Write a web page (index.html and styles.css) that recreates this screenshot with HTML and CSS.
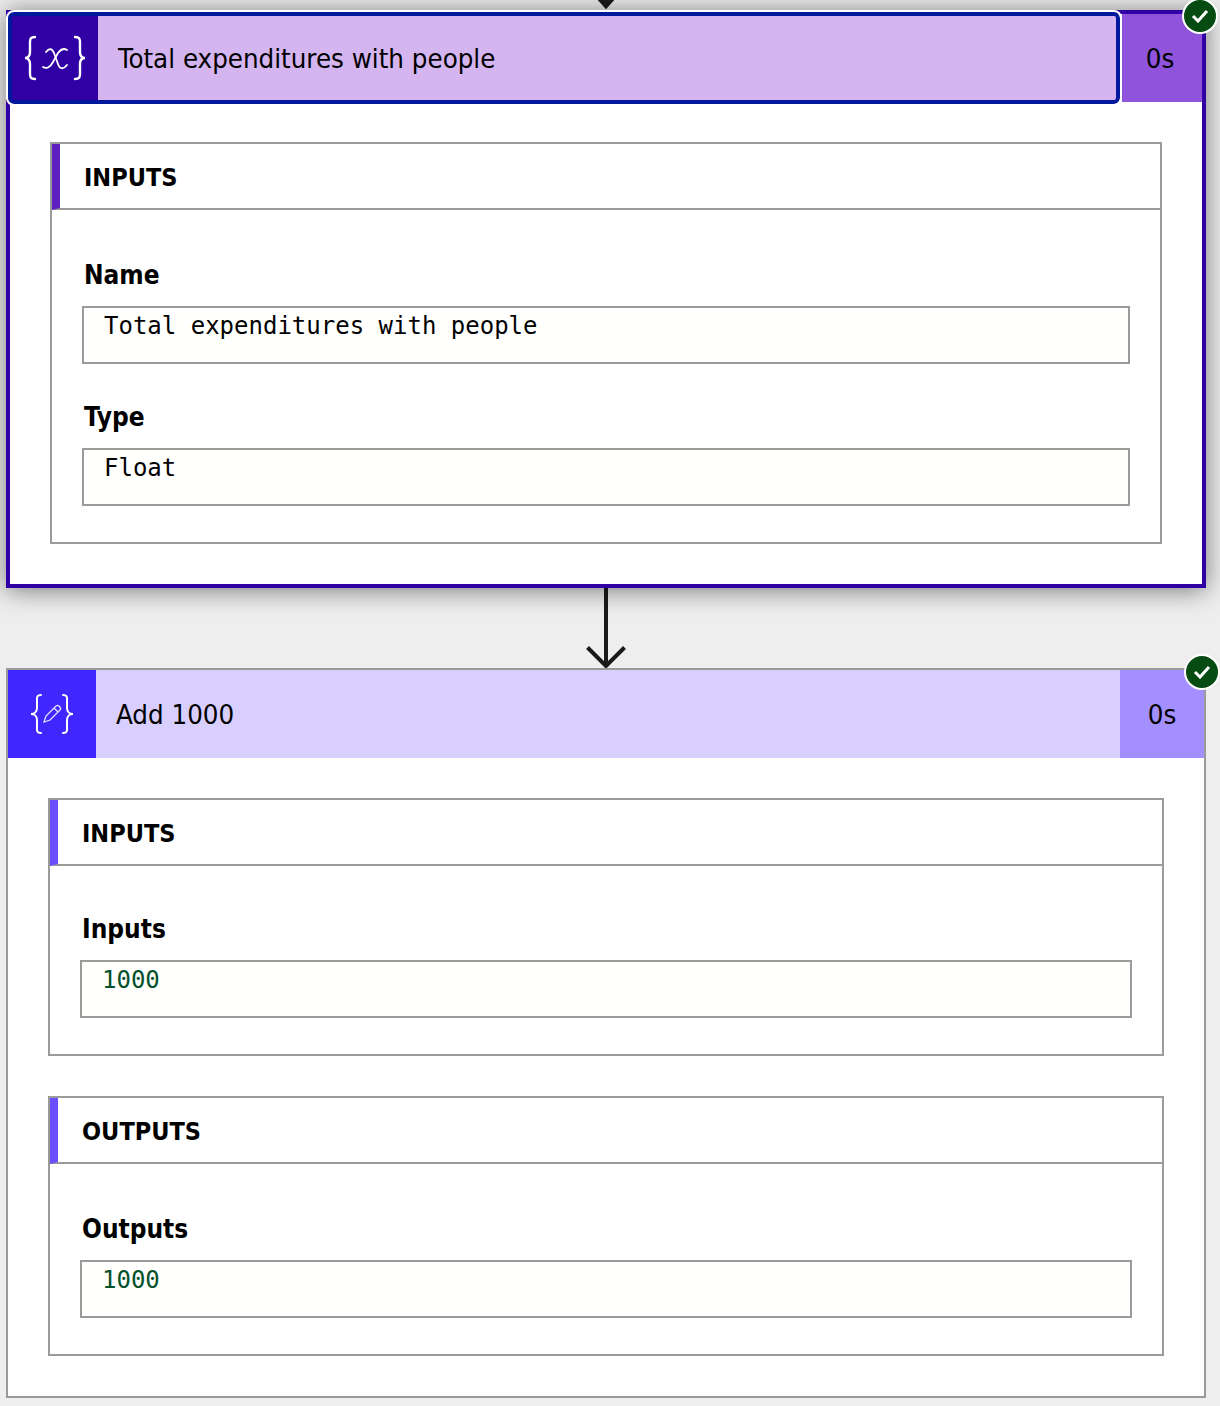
FILE: index.html
```html
<!DOCTYPE html>
<html>
    <head>
        <title>Run details</title>
        <meta charset="UTF-8">
        <link rel="stylesheet" href="styles.css">
    </head>
    <body>
        <div class="connector connector-top">
            <svg width="40" height="10" viewBox="0 0 40 10"><path d="M11 -3 L20 7 L29 -3 Z" fill="#1b1a19" stroke="#1b1a19" stroke-width="3"/></svg>
        </div>

        <div class="card card-selected">
            <div class="card-head">
                <div class="title-wrap">
                    <div class="card-icon">
                        <svg width="64" height="46" viewBox="0 0 64 46" fill="none" stroke="#fff" stroke-width="2.400" stroke-linecap="round">
                            <path d="M12 2 C6 2 7 6 7 12 V17 C7 21 5 23 2 23 C5 23 7 25 7 29 V34 C7 40 6 44 12 44"/>
                            <path d="M52 2 C58 2 57 6 57 12 V17 C57 21 59 23 62 23 C59 23 57 25 57 29 V34 C57 40 58 44 52 44"/>
                            <path d="M23 17 C26 13 29 13 31 18 L35 29 C37 35 41 34 44 30" stroke-width="1.800"/>
                            <path d="M44 15 C41 13 38 14 35 18 L30 27 C27 33 23 34 20 32" stroke-width="1.800"/>
                        </svg>
                    </div>
                    <div class="card-title">Total expenditures with people</div>
                </div>
                <div class="card-time">0s</div>
            </div>
            <div class="badge">
                <svg width="18" height="14" viewBox="0 0 18 14" fill="none" stroke="#fff" stroke-width="3"><path d="M2 7 L7 12 L16 2"/></svg>
            </div>
            <div class="card-body">
                <div class="section">
                    <div class="section-head">INPUTS</div>
                    <div class="section-body">
                        <div class="field-label">Name</div>
                        <div class="field-box">Total expenditures with people</div>
                        <div class="field-label">Type</div>
                        <div class="field-box">Float</div>
                    </div>
                </div>
            </div>
        </div>

        <div class="connector">
            <svg width="40" height="80" viewBox="0 0 40 80" fill="none" stroke="#1b1a19" stroke-width="4"><path d="M20 0 V78 M1.500 59.500 L20 78 L38.500 59.500"/></svg>
        </div>

        <div class="card card-plain">
            <div class="card-head">
                <div class="card-icon">
                    <svg width="46" height="40" viewBox="0 0 46 40" fill="none" stroke="#fff" stroke-width="2" stroke-linecap="round">
                        <path d="M12 1 C7 1 8 4 8 9 V14 C8 18 5 20 2 20 C5 20 8 22 8 26 V31 C8 36 7 39 12 39"/>
                        <path d="M34 1 C39 1 38 4 38 9 V14 C38 18 41 20 44 20 C41 20 38 22 38 26 V31 C38 36 39 39 34 39"/>
                        <path d="M15 28 L17 22 L27 12 C29 10 33 14 31 16 L21 26 Z M25 14 L29 18" stroke-width="1.300" opacity="0.85"/>
                    </svg>
                </div>
                <div class="card-title">Add 1000</div>
                <div class="card-time">0s</div>
            </div>
            <div class="badge">
                <svg width="18" height="14" viewBox="0 0 18 14" fill="none" stroke="#fff" stroke-width="3"><path d="M2 7 L7 12 L16 2"/></svg>
            </div>
            <div class="card-body">
                <div class="section">
                    <div class="section-head">INPUTS</div>
                    <div class="section-body">
                        <div class="field-label">Inputs</div>
                        <div class="field-box number">1000</div>
                    </div>
                </div>
                <div class="section">
                    <div class="section-head">OUTPUTS</div>
                    <div class="section-body">
                        <div class="field-label">Outputs</div>
                        <div class="field-box number">1000</div>
                    </div>
                </div>
            </div>
        </div>
    </body>
</html>
```

FILE: styles.css
```css
* {
    margin: 0;
    padding: 0;
    box-sizing: border-box;
    font-family: "DejaVu Sans", sans-serif;
    font-stretch: condensed;
    color: #000;
}
body {
    background-color: #eeeeee;
    padding: 0 14px 0 6px;
    overflow: hidden;
}
.connector {
    display: flex;
    justify-content: center;
    height: 80px;
}
.connector-top {
    height: 10px;
}
.connector svg {
    display: block;
}
.card {
    position: relative;
    width: 1200px;
    background-color: #fff;
}
.card-selected {
    height: 578px;
    border: 4px solid #3000a4;
    box-shadow: 0 2px 24px rgba(0, 0, 0, 0.5);
}
.card-plain {
    height: 730px;
    border: 2px solid #9b9a99;
}
.card-head {
    display: flex;
    height: 88px;
}
.card-icon {
    display: flex;
    justify-content: center;
    align-items: center;
    flex-shrink: 0;
    width: 88px;
}
.card-title {
    flex: 1;
    padding-left: 20px;
    font-size: 27.400px;
    line-height: 90px;
    white-space: nowrap;
}
.card-time {
    flex-shrink: 0;
    font-size: 27.400px;
    line-height: 90px;
    text-align: center;
}
.card-selected .title-wrap {
    display: flex;
    flex: 1;
    height: 92px;
    margin: -2px 2px 0 -2px;
    background-color: #d4b5f0;
    border: 4px solid #00189c;
    border-radius: 6px;
    outline: 2px solid #fff;
    position: relative;
}
.card-selected .card-icon {
    width: 86px;
    height: 84px;
    background-color: #3000a4;
}
.card-selected .card-title {
    line-height: 86px;
}
.card-selected .card-time {
    width: 80px;
    padding-right: 4px;
    background-color: #9054dc;
}
.card-plain .card-icon {
    background-color: #4127ff;
}
.card-plain .card-title {
    background-color: #d8cfff;
}
.card-plain .card-time {
    width: 84px;
    background-color: #a38fff;
}
.badge {
    position: absolute;
    top: -16px;
    right: -16px;
    display: flex;
    justify-content: center;
    align-items: center;
    width: 36px;
    height: 36px;
    background-color: #054b12;
    border: 2px solid #fff;
    border-radius: 50%;
}
.card-body {
    display: flex;
    flex-direction: column;
}
.card-selected .card-body {
    padding: 40px 40px 0;
}
.card-plain .card-body {
    gap: 40px;
    padding: 40px 40px 0;
}
.section {
    border: 2px solid #9b9a99;
}
.section-head {
    height: 66px;
    padding-left: 24px;
    border-left: 8px solid #5e1fc0;
    border-bottom: 2px solid #9b9a99;
    font-size: 25px;
    font-weight: bold;
    line-height: 68px;
}
.card-plain .section-head {
    border-left-color: #6b4eff;
}
.section-body {
    padding: 60px 30px 36px;
}
.card-plain .section:first-child .section-body {
    padding-top: 58px;
}
.field-label {
    height: 47px;
    margin-top: -11px;
    padding: 0 2px;
    font-size: 26px;
    font-weight: bold;
    line-height: 32px;
}
.field-box {
    height: 58px;
    margin-bottom: 48px;
    padding: 3px 20px;
    background-color: #fffffd;
    border: 2px solid #9b9a99;
    font-family: "DejaVu Sans Mono", monospace;
    font-stretch: normal;
    font-size: 24px;
    line-height: 30px;
}
.field-box:last-child {
    margin-bottom: 0;
}
.number {
    color: #04512c;
}
```
